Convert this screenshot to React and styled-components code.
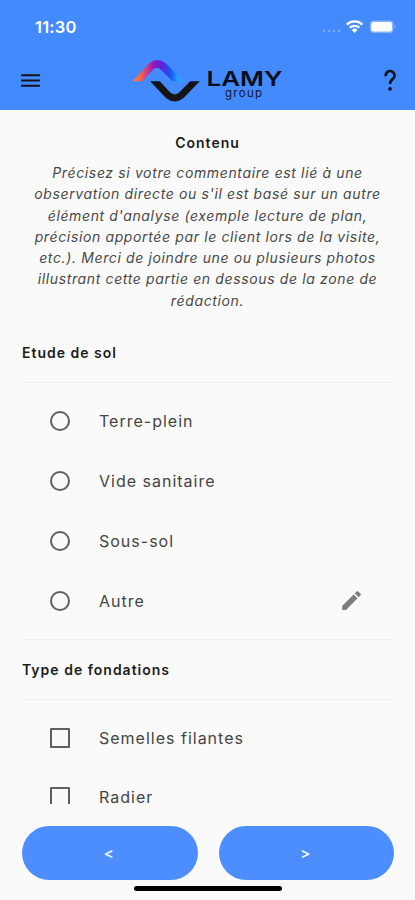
import React from 'react'
import styled, { createGlobalStyle } from 'styled-components'
import { MdMenu, MdEdit } from 'react-icons/md'

const GlobalStyle = createGlobalStyle`
  * {
    box-sizing: border-box;
  }

  body {
    margin: 0;
    background: #fafafa;
    font-family: Inter, 'Liberation Sans', sans-serif;
    color: #1c1c1c;
  }
`

const Screen = styled.div`
  display: flex;
  flex-direction: column;
  height: 900px;
  overflow: hidden;
  background: #fafafa;
`

const Header = styled.header`
  flex: none;
  height: 110px;
  background: #448aff;
`

const StatusBar = styled.div`
  display: flex;
  align-items: center;
  justify-content: space-between;
  height: 52px;
  padding: 2px 18px 0 35px;
`

const Time = styled.span`
  color: #fff;
  font-size: 16.5px;
  font-weight: 600;
  letter-spacing: 0.2px;
`

const Toolbar = styled.div`
  display: flex;
  align-items: center;
  justify-content: space-between;
  height: 57px;
  padding: 0 17px 0 18px;
`

const IconButton = styled.button`
  display: flex;
  align-items: center;
  justify-content: center;
  padding: 0;
  border: 0;
  background: none;
  color: ${props => props.$muted ? '#7d7d7d' : '#10131c'};
`

const Content = styled.main`
  flex: none;
  height: 694px;
  overflow: hidden;
  padding: 0 22px;
`

const Title = styled.h1`
  margin: 22px 0 0;
  text-align: center;
  font-size: 14px;
  line-height: 21px;
  font-weight: 600;
  letter-spacing: 1px;
`

const Description = styled.p`
  margin: 9px -10px 0;
  text-align: center;
  font-size: 14px;
  line-height: 21.3px;
  font-style: italic;
  letter-spacing: 0.63px;
  white-space: pre-line;
  color: #484848;
`

const SectionTitle = styled.h2`
  margin: 0;
  height: 60px;
  line-height: 60px;
  border-bottom: 1px solid #f0f0f0;
  font-size: 14px;
  font-weight: 600;
  letter-spacing: 1px;
`

const Section = styled.section`
  margin-top: ${props => props.$first ? '12.4px' : 0};
`

const Options = styled.ul`
  margin: 0 -1px 0 0;
  padding: 8px 0;
  list-style: none;
  border-bottom: 1px solid #f0f0f0;
`

const Option = styled.li`
  display: flex;
  align-items: center;
  height: 59.8px;
  padding: 0 30px 0 28px;
  font-size: 16px;
  letter-spacing: 1px;
  color: #444;
`

const Mark = styled.span`
  flex: none;
  width: 20px;
  height: 20px;
  margin-right: 29px;
  border: 2px solid #5f5f5f;
  border-radius: ${props => props.$round ? '50%' : '1px'};
`

const Label = styled.span`
  flex: 1;
`

const Footer = styled.footer`
  display: flex;
  gap: 21px;
  padding: 22px 21px 0 22px;
`

const NavButton = styled.button`
  flex: 1;
  height: 54px;
  padding: 0 2px 0 0;
  border: 0;
  border-radius: 27px;
  background: #4c8eff;
  color: #fff;
  font: 500 15px Inter, sans-serif;
`

const HomeIndicator = styled.div`
  flex: none;
  width: 148px;
  height: 5px;
  margin: 6px auto 0;
  border-radius: 3px;
  background: #000;
`

const StatusIcons = () => (
  <svg width="76" height="20" viewBox="321 17 76 20">
    <g fill="#fff" opacity="0.3">
      <circle cx="324" cy="31" r="1.2" />
      <circle cx="329" cy="31" r="1.2" />
      <circle cx="334" cy="31" r="1.2" />
      <circle cx="339" cy="31" r="1.2" />
    </g>
    <g fill="none" stroke="#fff" strokeWidth="2.3">
      <path d="M346.8 24.6 a11.2 11.2 0 0 1 15.6 0" />
      <path d="M349.8 27.7 a7 7 0 0 1 9.6 0" />
    </g>
    <path d="M351.8 29.9 a4.1 4.1 0 0 1 5.6 0 L354.6 33 Z" fill="#fff" />
    <rect x="370" y="20.5" width="23.5" height="12.5" rx="3.5" fill="#fff" opacity="0.35" />
    <rect x="371.3" y="22" width="20.8" height="9.6" rx="2" fill="#fff" />
    <path d="M394.6 24.8 a2.2 2.2 0 0 1 0 4 Z" fill="#fff" opacity="0.4" />
  </svg>
)

const LogoBox = styled.div`
  display: flex;
  margin-right: 9px;
`

const Logo = () => (
  <svg width="154" height="46" viewBox="131 57.5 154 46">
    <defs>
      <linearGradient id="arch" gradientUnits="userSpaceOnUse" x1="133" y1="0" x2="184" y2="0">
        <stop offset="0" stopColor="#ff7a2e" />
        <stop offset="0.14" stopColor="#f2684a" />
        <stop offset="0.28" stopColor="#c93a92" />
        <stop offset="0.42" stopColor="#8d18b8" />
        <stop offset="0.56" stopColor="#5f22dc" />
        <stop offset="0.74" stopColor="#1458f2" />
        <stop offset="0.88" stopColor="#20a0ff" />
        <stop offset="1" stopColor="#30c0ff" stopOpacity="0.4" />
      </linearGradient>
    </defs>
    <path
      d="M132.6 80.8 H142.4 L152.8 69.6 Q157 65 161.2 69.6 L172.5 80.8 H183.5 L165.8 62.8 Q157 56.4 148.9 62.8 Z"
      fill="url(#arch)"
    />
    <path
      d="M150.2 80.8 H159.8 L170 91.8 Q174.7 96 179.4 91.8 L190.2 80.8 H199.8 L183.3 97.8 Q174.7 104.2 166.2 97.8 Z"
      fill="#151515"
    />
    <text x="206.5" y="85" fontSize="20.5" fontWeight="600" textLength="76" lengthAdjust="spacingAndGlyphs" fill="#0c0f18">LAMY</text>
    <text x="225" y="96.5" fontSize="11.5" textLength="37" fill="#10182c">group</text>
  </svg>
)

const HelpIcon = () => (
  <svg width="16" height="24" viewBox="0 0 16 24">
    <path
      d="M3.8 7.2 A4.4 4.4 0 1 1 11.2 9.6 C9.4 11.2 8 12 8 15"
      fill="none"
      stroke="currentColor"
      strokeWidth="2.7"
    />
    <circle cx="8" cy="19.8" r="1.9" fill="currentColor" />
  </svg>
)

const soils = ['Terre-plein', 'Vide sanitaire', 'Sous-sol', 'Autre']
const foundations = ['Semelles filantes', 'Radier']

const description = `Précisez si votre commentaire est lié à une
observation directe ou s'il est basé sur un autre
élément d'analyse (exemple lecture de plan,
précision apportée par le client lors de la visite,
etc.). Merci de joindre une ou plusieurs photos
illustrant cette partie en dessous de la zone de
rédaction.`

const App = () => (
  <Screen>
    <GlobalStyle />
    <Header>
      <StatusBar>
        <Time>11:30</Time>
        <StatusIcons />
      </StatusBar>
      <Toolbar>
        <IconButton aria-label="Menu"><MdMenu size={25} /></IconButton>
        <LogoBox>
          <Logo />
        </LogoBox>
        <IconButton aria-label="Aide"><HelpIcon /></IconButton>
      </Toolbar>
    </Header>
    <Content>
      <Title>Contenu</Title>
      <Description>{description}</Description>
      <Section $first>
        <SectionTitle>Etude de sol</SectionTitle>
        <Options>
          {soils.map(name => (
            <Option key={name}>
              <Mark $round />
              <Label>{name}</Label>
              {name === 'Autre' && <IconButton $muted aria-label="Modifier"><MdEdit size={25} /></IconButton>}
            </Option>
          ))}
        </Options>
      </Section>
      <Section>
        <SectionTitle>Type de fondations</SectionTitle>
        <Options>
          {foundations.map(name => (
            <Option key={name}>
              <Mark />
              <Label>{name}</Label>
            </Option>
          ))}
        </Options>
      </Section>
    </Content>
    <Footer>
      <NavButton>&lt;</NavButton>
      <NavButton>&gt;</NavButton>
    </Footer>
    <HomeIndicator />
  </Screen>
)

export default App
